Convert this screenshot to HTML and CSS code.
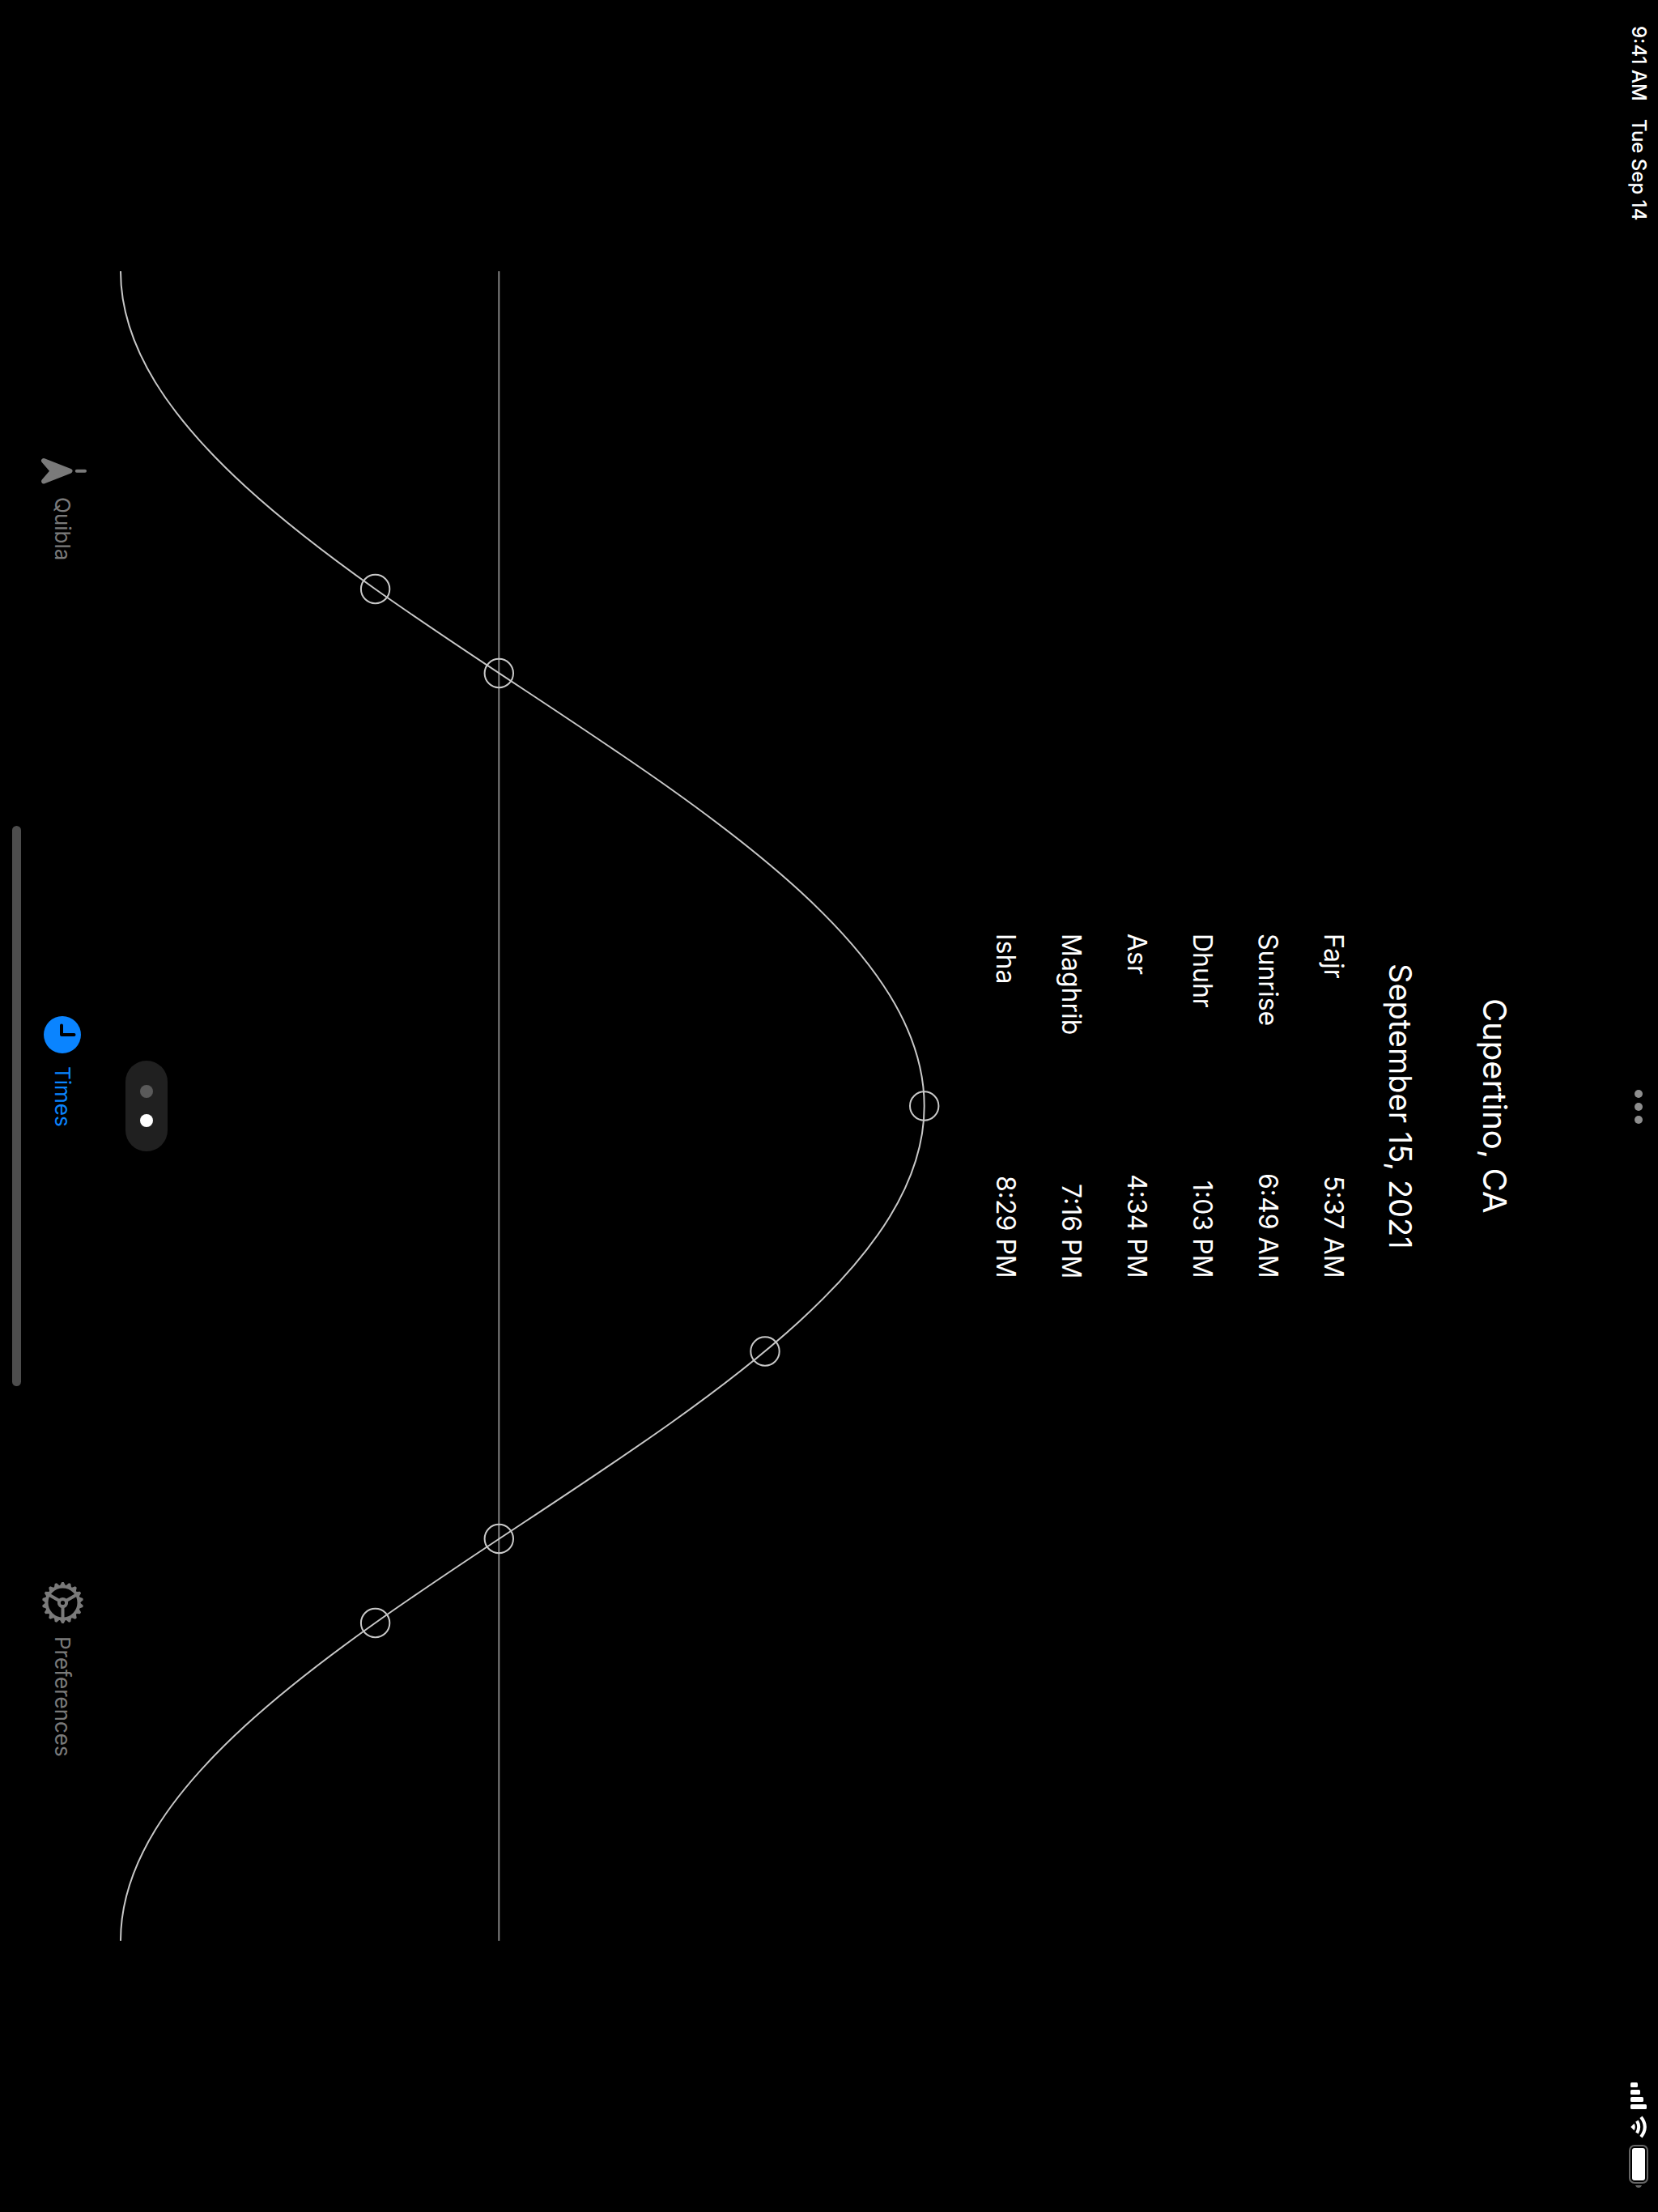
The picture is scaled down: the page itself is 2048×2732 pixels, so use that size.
FILE: index.html
```html
<!DOCTYPE html>
<html lang="en">
<head>
<meta charset="utf-8">
<meta name="viewport" content="width=device-width, initial-scale=1">
<title>Prayer Times</title>
<link rel="stylesheet" href="styles.css">
</head>
<body>
<div class="app">
  <header class="status">
    <div class="status-side">
      <span>9:41 AM</span>
      <span>Tue Sep 14</span>
    </div>
    <div class="dots"><i></i><i></i><i></i></div>
    <div class="status-side status-end">
      <svg class="signal" width="20" height="33" viewBox="0 0 20 33" aria-label="Signal">
        <rect x="0" y="0" width="9" height="6" rx="1.5"/>
        <rect x="0" y="9" width="12" height="6" rx="1.5"/>
        <rect x="0" y="18" width="16" height="6" rx="1.5"/>
        <rect x="0" y="27" width="20" height="6" rx="1.5"/>
      </svg>
      <svg class="wifi" width="20" height="28" viewBox="0 0 20 28" aria-label="Wi-Fi">
        <path class="fill" d="M0.3 14 L4.500 9.800 Q7 14 4.500 18.200 Z"/>
        <path d="M8 6.500 Q12.400 14 8 21.500"/>
        <path d="M13 1.800 Q22.600 14 13 26.200"/>
      </svg>
      <svg class="battery" width="24" height="53" viewBox="0 0 24 53" aria-label="Battery full">
        <rect class="shell" x="1" y="1" width="22" height="46" rx="6"/>
        <rect class="charge" x="4" y="4" width="16" height="40" rx="3"/>
        <path class="nub" d="M8 50 H16 Q15 53 12 53 Q9 53 8 50 Z"/>
      </svg>
    </div>
  </header>

  <main class="main">
    <h1 class="place">Cupertino, CA</h1>
    <h2 class="date">September 15, 2021</h2>
    <table class="times">
      <tbody>
        <tr><th scope="row">Fajr</th><td>5:37 AM</td></tr>
        <tr><th scope="row">Sunrise</th><td>6:49 AM</td></tr>
        <tr><th scope="row">Dhuhr</th><td>1:03 PM</td></tr>
        <tr><th scope="row">Asr</th><td>4:34 PM</td></tr>
        <tr><th scope="row">Maghrib</th><td>7:16 PM</td></tr>
        <tr><th scope="row">Isha</th><td>8:29 PM</td></tr>
      </tbody>
    </table>
    <svg class="chart" viewBox="0 0 996 2062" preserveAspectRatio="xMinYMid meet" aria-label="Sun path">
      <path class="horizon" d="M468.300 0 V2062"/>
      <path class="curve" d="M1 0 C1 375.500 993.700 655.500 993.700 1031 C993.700 1406.500 1 1686.500 1 2062"/>
      <g class="marks">
        <circle cx="315.600" cy="392.500" r="17.700"/>
        <circle cx="468.300" cy="496.500" r="17.700"/>
        <circle cx="993.700" cy="1031" r="17.700"/>
        <circle cx="797" cy="1334" r="17.700"/>
        <circle cx="468.300" cy="1565.500" r="17.700"/>
        <circle cx="315.600" cy="1669.500" r="17.700"/>
      </g>
    </svg>
    <div class="pager">
      <button class="page" type="button" aria-label="Page 1"></button>
      <button class="page current" type="button" aria-label="Page 2"></button>
    </div>
  </main>

  <nav class="tabs">
    <a class="tab" href="#quibla">
      <svg width="52" height="32" viewBox="0 0 52 32" aria-hidden="true">
        <path class="arrow" d="M3 3 L35.500 15.700 L3 28.500 L14 15.700 Z"/>
        <path class="needle" d="M43.800 15.700 H54"/>
      </svg>
      <span>Quibla</span>
    </a>
    <a class="tab active" href="#times">
      <svg width="46" height="46" viewBox="0 0 46 46" aria-hidden="true">
        <circle class="disc" cx="23" cy="23" r="23"/>
        <path class="hands" d="M22 11.500 V23 H37.500"/>
      </svg>
      <span>Times</span>
    </a>
    <a class="tab" href="#preferences">
      <svg width="51" height="51" viewBox="-25.5 -25.5 51 51" aria-hidden="true">
        <g class="teeth">
          <path id="tooth" d="M-3.600 -21 L-1.200 -25.400 H1.200 L3.600 -21 Z"/>
          <use href="#tooth" transform="rotate(20)"/><use href="#tooth" transform="rotate(40)"/>
          <use href="#tooth" transform="rotate(60)"/><use href="#tooth" transform="rotate(80)"/>
          <use href="#tooth" transform="rotate(100)"/><use href="#tooth" transform="rotate(120)"/>
          <use href="#tooth" transform="rotate(140)"/><use href="#tooth" transform="rotate(160)"/>
          <use href="#tooth" transform="rotate(180)"/><use href="#tooth" transform="rotate(200)"/>
          <use href="#tooth" transform="rotate(220)"/><use href="#tooth" transform="rotate(240)"/>
          <use href="#tooth" transform="rotate(260)"/><use href="#tooth" transform="rotate(280)"/>
          <use href="#tooth" transform="rotate(300)"/><use href="#tooth" transform="rotate(320)"/>
          <use href="#tooth" transform="rotate(340)"/>
        </g>
        <circle class="wheel" r="20"/>
        <circle class="wheel" r="4.600"/>
        <path class="wheel" d="M0 5 V20 M-4.300 -2.500 L-17.300 -10 M4.300 -2.500 L17.300 -10"/>
      </svg>
      <span>Preferences</span>
    </a>
  </nav>
  <div class="home"></div>
</div>
</body>
</html>
```
FILE: styles.css
```css
* { box-sizing: border-box; }

html { background: #000; }

body {
  margin: 0;
  background: #000;
  color: #fff;
  font-family: Inter, "Liberation Sans", sans-serif;
}

/* The device is held on its side: lines run top to bottom and
   blocks stack from the right edge to the left. */
.app {
  writing-mode: vertical-rl;
  text-orientation: sideways;
  display: flex;
  flex-direction: column;
  width: 100vw;
  height: 100vh;
  overflow: hidden;
}

svg { display: block; flex: none; overflow: visible; }

.status {
  flex: none;
  display: flex;
  align-items: center;
  block-size: 48px;
  padding-inline: 32px 30px;
  font-size: 24px;
  font-weight: 500;
}

.status-side { flex: 1; display: flex; align-items: center; gap: 22px; }
.status-end { justify-content: flex-end; gap: 8px; }

.dots { display: flex; gap: 6px; }
.dots i { width: 10px; height: 10px; border-radius: 50%; background: #8e8e8e; }

.signal { fill: #fff; }
.wifi { fill: none; stroke: #fff; stroke-width: 4; }
.wifi .fill { fill: #fff; stroke: none; }
.battery .shell { fill: none; stroke: #666; stroke-width: 2; }
.battery .charge { fill: #fff; }
.battery .nub { fill: #666; }

.main {
  position: relative;
  flex: 1;
  display: flex;
  flex-direction: column;
  align-items: center;
  min-block-size: 0;
  padding-block: 126px 20px;
}

.place, .date { margin: 0; font-weight: 400; line-height: 56px; }
.place { font-size: 40px; }
.date { margin-block-start: 60px; font-size: 38px; }

.times {
  inline-size: 426px;
  margin-block-start: 14px;
  border-collapse: collapse;
  font-size: 32px;
  line-height: 81px;
}
.times th, .times td { padding: 0; font-weight: 400; text-align: start; }
.times td { text-align: end; }

.chart {
  flex: 1;
  min-block-size: 0;
  inline-size: calc(100% - 670px);
}
.chart path, .chart circle { fill: none; stroke: #c8c8c8; stroke-width: 2; }
.chart .horizon { stroke: #808080; }

.pager {
  position: absolute;
  inset-block-end: 27px;
  inset-inline: 0;
  margin-inline: auto;
  display: flex;
  align-items: center;
  justify-content: center;
  gap: 20px;
  inline-size: 112px;
  block-size: 52px;
  border-radius: 26px;
  background: #202020;
}
.page {
  width: 16px;
  height: 16px;
  padding: 0;
  border: 0;
  border-radius: 50%;
  background: #5a5a5a;
}
.page.current { background: #fff; }

.tabs {
  flex: none;
  display: flex;
  justify-content: space-evenly;
  block-size: 102px;
  padding-inline-start: 4px;
}
.tab {
  display: flex;
  align-items: center;
  gap: 16px;
  color: #7a7a7a;
  font-size: 26px;
  text-decoration: none;
}
.tab.active { color: #0a84ff; }

.arrow { fill: currentColor; stroke: currentColor; stroke-width: 6; stroke-linejoin: round; }
.needle { stroke: currentColor; stroke-width: 4; stroke-linecap: round; }
.disc { fill: currentColor; }
.hands { fill: none; stroke: #000; stroke-width: 4; stroke-linecap: round; stroke-linejoin: round; }
.teeth { fill: currentColor; }
.wheel { fill: none; stroke: currentColor; stroke-width: 4; }

.home {
  flex: none;
  align-self: center;
  inline-size: 692px;
  block-size: 11px;
  margin-block-end: 15px;
  border-radius: 6px;
  background: #4d4d4d;
}
```
